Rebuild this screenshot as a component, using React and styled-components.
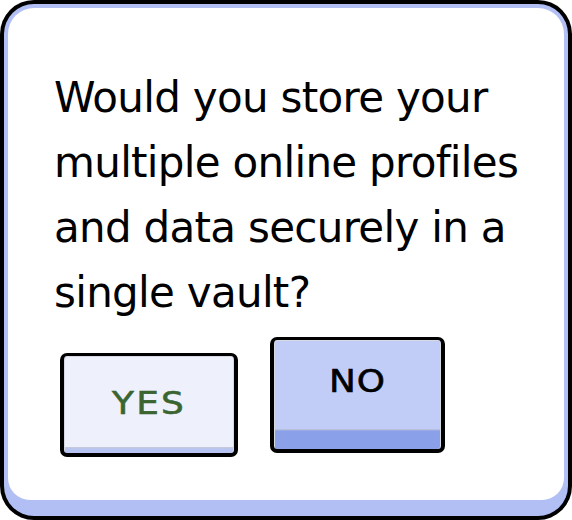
import React from 'react';
import styled, { createGlobalStyle } from 'styled-components';

const Global = createGlobalStyle`
    html, body {
        margin: 0;
        padding: 0;
        background: #ffffff;
    }
    body {
        font-family: 'DejaVu Sans', sans-serif;
    }
`;

const Frame = styled.div`
    box-sizing: border-box;
    width: 572px;
    height: 520px;
    padding: 4px;
    background: #000000;
    border-radius: 34px;
`;

const Rim = styled.div`
    box-sizing: border-box;
    height: 100%;
    padding: 4px 4px 16px 4px;
    background: #b1bff5;
    border-radius: 30px;
`;

const Panel = styled.div`
    box-sizing: border-box;
    height: 100%;
    padding: 57px 30px 0 46px;
    background: #ffffff;
    border-radius: 26px 26px 22px 22px;
`;

const Question = styled.p`
    margin: 0;
    font-family: 'DejaVu Sans', sans-serif;
    font-size: 42px;
    line-height: 65px;
    color: #000000;
    letter-spacing: -0.7px;
`;

const Choices = styled.div`
    display: flex;
    align-items: flex-start;
    gap: 32px;
    margin-top: 12px;
    padding-left: 6px;
`;

const Key = styled.button`
    box-sizing: border-box;
    display: flex;
    align-items: center;
    justify-content: center;
    width: ${p => p.$w}px;
    height: ${p => p.$h}px;
    margin-top: ${p => p.$drop}px;
    padding: 0 0 ${p => p.$lift}px 0;
    border: 4px solid #000000;
    border-top-width: 3px;
    border-radius: 7px;
    background: linear-gradient(
        to bottom,
        ${p => p.$face} 0,
        ${p => p.$face} calc(100% - ${p => p.$edge}px),
        #c9cbd8 calc(100% - ${p => p.$edge}px),
        ${p => p.$rim} calc(100% - ${p => p.$edge - 2}px)
    );
    box-shadow: inset 1px 1px 0 #d6d8e2, inset -1px 0 0 #d6d8e2;
    font-family: 'DejaVu Sans', sans-serif;
    font-size: ${p => p.$size}px;
    color: ${p => p.$ink};
    cursor: pointer;
`;

const Label = styled.span`
    display: inline-block;
    letter-spacing: ${p => p.$track}px;
    transform: scaleX(1.12);
    -webkit-text-stroke: 0.6px currentColor;
`;

const App = () => (
    <>
        <Global />
        <Frame>
            <Rim>
                <Panel>
                    <Question>
                        Would you store your<br />
                        multiple online profiles<br />
                        and data securely in a<br />
                        single vault?
                    </Question>
                    <Choices>
                        <Key $w={178} $h={104} $drop={16} $edge={6} $lift={4} $size={32}
                            $face="#eef0fb" $rim="#b7c3f0" $ink="#3b6530">
                            <Label $track={2}>YES</Label>
                        </Key>
                        <Key $w={175} $h={116} $drop={0} $edge={20} $lift={28} $size={32}
                            $face="#c1cdf6" $rim="#8aa0e8" $ink="#000000">
                            <Label $track={1}>NO</Label>
                        </Key>
                    </Choices>
                </Panel>
            </Rim>
        </Frame>
    </>
);

export default App;
